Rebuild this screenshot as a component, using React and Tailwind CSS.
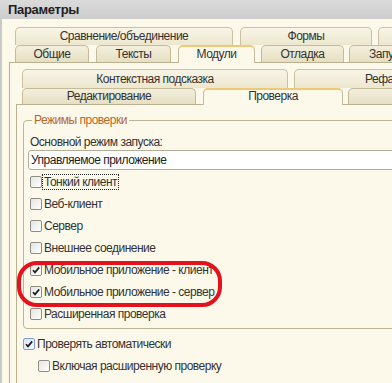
import React from "react";

function Check({ checked, blue }) {
  return (
    <span
      className={
        "shrink-0 w-[12px] h-[12px] rounded-[2px] border flex items-center justify-center " +
        (blue
          ? "border-[#7f9fd8] bg-gradient-to-br from-[#dce7fb] to-[#f4f8ff]"
          : "border-[#8e8e84] bg-gradient-to-br from-[#e4e4e0] to-white")
      }
    >
      {checked && (
        <svg width="10" height="10" viewBox="0 0 10 10">
          <path d="M2 5.2 L4 7.4 L8.2 2.4" fill="none" stroke="#1e1e1e" strokeWidth="1.7" />
        </svg>
      )}
    </span>
  );
}

function Row({ label, checked, focus, blue, className = "" }) {
  return (
    <div className={"h-[22px] flex items-center " + className}>
      <Check checked={checked} blue={blue} />
      <span className={focus ? "ml-[1px] px-[1px] outline outline-1 outline-dotted outline-[#222] leading-[14px]" : "ml-[2px] leading-[14px]"}>
        {label}
      </span>
    </div>
  );
}

const backTab =
  "shrink-0 border border-b-0 border-[#c9c1a0] rounded-t-[5px] bg-gradient-to-b from-[#f8f5e6] to-[#ede7cf] flex justify-center whitespace-nowrap";
const frontTab =
  "shrink-0 border border-b-0 border-[#c4bb98] rounded-t-[5px] bg-gradient-to-b from-[#f3efdc] to-[#e6dfc3] flex justify-center whitespace-nowrap";
const activeTab =
  "shrink-0 relative z-10 border border-b-0 border-[#c4bb98] border-t-2 border-t-[#f0c978] rounded-t-[5px] bg-[#fcf9ea] flex justify-center whitespace-nowrap";

export default function App() {
  return (
    <div className="relative w-[392px] h-[383px] overflow-hidden bg-[#fcf9ea] text-[12px] tracking-[-0.5px] text-[#333] font-['Liberation_Sans',Arial,sans-serif]">
      <div className="h-[19px] bg-gradient-to-b from-[#dadada] to-[#cdcdcd] pl-[8px] font-bold text-[13px] tracking-[-0.3px] text-[#1e1e1e] leading-[20px]">
        Параметры
      </div>
      <div className="flex h-[364px]">
        <div className="w-[2px] shrink-0 bg-[#c9c9c9]" />
        <div className="flex-1 min-w-0 flex flex-col pt-[8px] overflow-hidden">
          {/* outer tabs back row */}
          <div className="flex pl-[13px] h-[18px]">
            <div className={backTab + " w-[218px] h-[18px] leading-[17px]"}>Сравнение/объединение</div>
            <div className={backTab + " ml-[7px] w-[132px] h-[18px] leading-[17px]"}>Формы</div>
            <div className={backTab + " ml-[6px] w-[120px] h-[18px] leading-[17px]"}>Интерфейс</div>
          </div>
          {/* outer tabs front row */}
          <div className="flex pl-[13px] h-[17px] items-start">
            <div className={frontTab + " w-[74px] h-[17px] leading-[16px]"}>Общие</div>
            <div className={frontTab + " ml-[7px] w-[75px] h-[17px] leading-[16px]"}>Тексты</div>
            <div className={activeTab + " ml-[7px] w-[77px] h-[18px] leading-[14px]"}>Модули</div>
            <div className={frontTab + " ml-[6px] w-[83px] h-[17px] leading-[16px]"}>Отладка</div>
            <div className={frontTab + " ml-[5px] w-[90px] h-[17px] leading-[16px] justify-start pl-[19px]"}>Запуск</div>
          </div>
          {/* outer panel */}
          <div className="ml-[7px] flex-1 border-l border-t border-[#b9b092] flex flex-col">
            <div className="mt-[6px] flex pl-[12px] h-[19px]">
              <div className={backTab + " w-[266px] h-[19px] leading-[18px]"}>Контекстная подсказка</div>
              <div className={backTab + " ml-[6px] w-[150px] h-[19px] leading-[18px] justify-start pl-[70px]"}>Рефакторинг</div>
            </div>
            <div className="flex pl-[12px] h-[16px] items-start">
              <div className={frontTab + " w-[174px] h-[16px] leading-[15px]"}>Редактирование</div>
              <div className={activeTab + " ml-[7px] w-[140px] h-[17px] leading-[13px]"}>Проверка</div>
              <div className={frontTab + " ml-[5px] w-[80px] h-[16px]"} />
            </div>
            {/* inner panel */}
            <div className="ml-[6px] flex-1 border-l border-t border-[#b9b092] flex flex-col">
              <fieldset className="ml-[6px] mt-[8px] w-[420px] border border-[#bdb597] rounded-[4px] pl-[4px] pb-[3px]">
                <legend className="ml-[4px] px-[2px] leading-[15px] text-[#b8662a]">Режимы проверки</legend>
                <div className="mt-[6px] pl-[2px] leading-[16px]">Основной режим запуска:</div>
                <div className="h-[20px] border border-[#b4ae98] rounded-l-[3px] bg-white pl-[2px] leading-[18px] text-[#222]">
                  Управляемое приложение
                </div>
                <div className="mt-[1px] pl-[2px]">
                  <Row label="Тонкий клиент" focus />
                  <Row label="Веб-клиент" />
                  <Row label="Сервер" />
                  <Row label="Внешнее соединение" />
                  <Row label="Мобильное приложение - клиент" checked />
                  <Row label="Мобильное приложение - сервер" checked />
                  <Row label="Расширенная проверка" />
                </div>
              </fieldset>
              <Row label="Проверять автоматически" checked blue className="mt-[4px] ml-[6px]" />
              <Row label="Включая расширенную проверку" className="ml-[21px]" />
            </div>
          </div>
        </div>
      </div>
      <div className="absolute left-[17px] top-[261px] w-[205px] h-[46px] border-[4px] border-[#e3121c] rounded-[20px]" />
    </div>
  );
}
